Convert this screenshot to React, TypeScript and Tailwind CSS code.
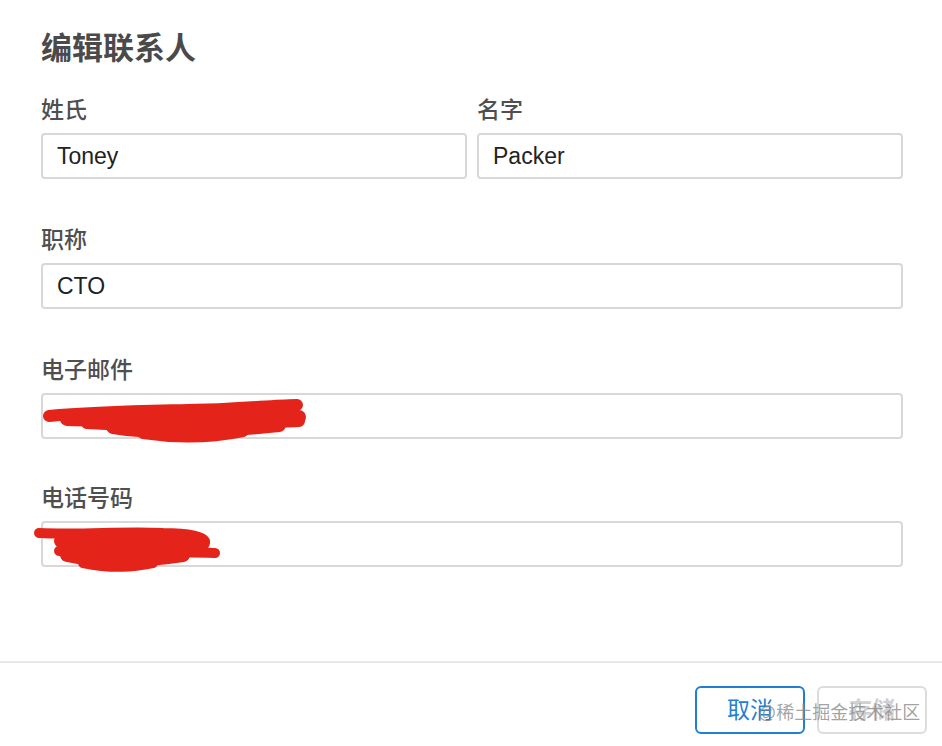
import React from 'react'

const font = { fontFamily: '"Liberation Sans", "Noto Sans CJK SC", sans-serif' }

function Field({
  label,
  value,
  children,
}: {
  label: string
  value?: string
  children?: React.ReactNode
}) {
  return (
    <div className="flex flex-col">
      <label className="text-[23px] leading-[30px] text-[#4f4f4f] font-medium mb-[8px]">{label}</label>
      <div className="relative h-[46px] rounded-[4px] border-2 border-[#d8d8d8] bg-white flex items-center px-[14px] text-[23px] text-[#222]">
        {value}
        {children}
      </div>
    </div>
  )
}

export default function App() {
  return (
    <div className="w-[942px] h-[746px] bg-white relative overflow-hidden" style={font}>
      <div className="pt-[28px] pl-[41px] pr-[39px]">
        <h1 className="text-[31px] leading-[42px] font-bold text-[#4a4a4a] mb-[25px]">编辑联系人</h1>

        <div className="grid grid-cols-2 gap-[10px]">
          <Field label="姓氏" value="Toney" />
          <Field label="名字" value="Packer" />
        </div>

        <div className="mt-[46px]">
          <Field label="职称" value="CTO" />
        </div>

        <div className="mt-[46px]">
          <Field label="电子邮件">
            {/* redacted */}
            <svg className="absolute left-0 top-0 overflow-visible" width="300" height="50">
              <g stroke="#e4241a" strokeLinecap="round" strokeLinejoin="round" fill="none">
                <path d="M6 21 C60 16 120 16 180 14 C220 12 240 10 254 10" strokeWidth="12" />
                <path d="M24 24 C80 26 150 22 256 22" strokeWidth="14" />
                <path d="M44 28 C100 32 170 30 256 26" strokeWidth="12" />
                <path d="M70 32 C120 40 180 36 236 30" strokeWidth="14" />
                <path d="M100 38 C140 44 170 42 200 36" strokeWidth="12" />
              </g>
            </svg>
          </Field>
        </div>

        <div className="mt-[44px]">
          <Field label="电话号码">
            <svg className="absolute left-0 top-0 overflow-visible" width="200" height="50">
              <g stroke="#e4241a" strokeLinecap="round" strokeLinejoin="round" fill="none">
                <path d="M-4 10 C40 12 80 8 120 10 C150 10 160 14 162 18" strokeWidth="10" />
                <path d="M18 18 C60 20 110 16 160 20" strokeWidth="14" />
                <path d="M16 28 C60 30 120 28 172 30" strokeWidth="10" />
                <path d="M24 32 C60 40 100 38 140 32" strokeWidth="14" />
                <path d="M40 40 C70 46 90 44 110 40" strokeWidth="10" />
              </g>
            </svg>
          </Field>
        </div>
      </div>

      <div className="absolute left-0 right-0 top-[661px] h-[2px] bg-[#e8e8e8]" />

      <div className="absolute right-[15px] top-[686px] flex gap-[12px]">
        <button className="w-[110px] h-[48px] rounded-[6px] border-2 border-[#1f7fd2] text-[#1f7fd2] text-[23px] bg-white">
          取消
        </button>
        <button className="w-[110px] h-[48px] rounded-[6px] border-2 border-[#dcdcdc] text-[#d0d0d0] text-[23px] font-bold bg-white">
          存储
        </button>
      </div>

      <div className="absolute left-[758px] top-[699px] text-[18px] leading-[28px] text-[#8a8a8a]/80 pointer-events-none">
        @稀土掘金技术社区
      </div>
    </div>
  )
}
